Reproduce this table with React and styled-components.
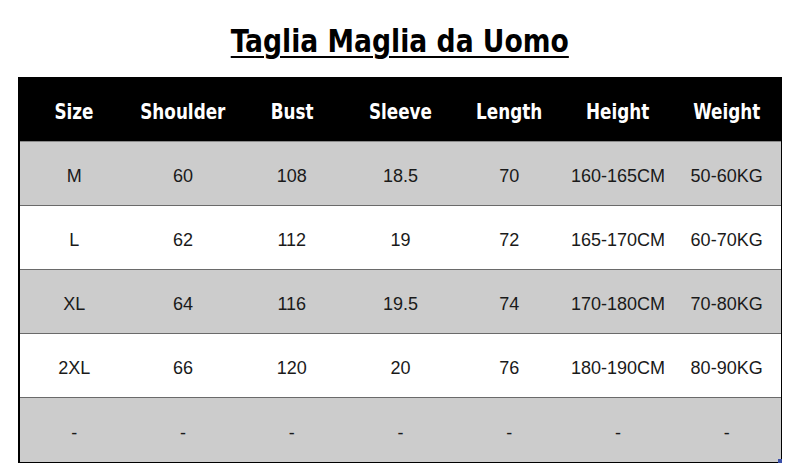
import React from "react";
import styled, { createGlobalStyle } from "styled-components";

const Global = createGlobalStyle`
  html, body { margin: 0; padding: 0; background: #fff; }
  body { width: 799px; height: 474px; overflow: hidden; }
`;

const Page = styled.div`
  width: 799px;
  height: 474px;
  display: flex;
  flex-direction: column;
  align-items: center;
  padding-top: 21px;
  box-sizing: border-box;
`;

const Title = styled.h1`
  margin: 0 0 16px;
  font-family: "DejaVu Sans Condensed", "Liberation Sans", sans-serif;
  font-weight: 700;
  font-size: 32px;
  line-height: 40px;
  color: #000;
  text-decoration: underline;
  text-decoration-thickness: 2px;
  text-underline-offset: 4px;
  transform: scaleX(0.925);
`;

const Table = styled.div`
  position: relative;
  width: 764px;
  margin-left: 1px;
  border: 1px solid #000;
  border-left-width: 2px;
  box-sizing: border-box;
  display: grid;
  grid-template-columns: repeat(7, 1fr);
`;

const Row = styled.div`
  display: contents;
`;

const HeadCell = styled.div`
  height: 64px;
  background: #000;
  color: #fff;
  display: flex;
  align-items: center;
  justify-content: center;
  font-family: "DejaVu Sans Condensed", "Liberation Sans", sans-serif;
  font-weight: 700;
  font-size: 21px;
  border-bottom: 1px solid #8a8a8a;
  box-sizing: border-box;
  padding-top: 4px;
`;

const HeadLabel = styled.span`
  display: inline-block;
  transform: scaleX(0.89);
`;

const Cell = styled.div`
  height: 64px;
  background: ${(p) => (p.$shade ? "#cccccc" : "#ffffff")};
  color: #1a1a1a;
  display: flex;
  align-items: center;
  justify-content: center;
  font-family: "Liberation Sans", Arial, sans-serif;
  font-size: 18px;
  border-bottom: ${(p) => (p.$last ? "none" : "1px solid #6a6a6a")};
  box-sizing: border-box;
  padding-top: 6px;
`;

const Handle = styled.span`
  position: absolute;
  right: -1px;
  bottom: -1px;
  width: 4px;
  height: 4px;
  background: #3a4fa8;
`;

const headers = ["Size", "Shoulder", "Bust", "Sleeve", "Length", "Height", "Weight"];
const rows = [
  ["M", "60", "108", "18.5", "70", "160-165CM", "50-60KG"],
  ["L", "62", "112", "19", "72", "165-170CM", "60-70KG"],
  ["XL", "64", "116", "19.5", "74", "170-180CM", "70-80KG"],
  ["2XL", "66", "120", "20", "76", "180-190CM", "80-90KG"],
  ["-", "-", "-", "-", "-", "-", "-"],
];

export default function App() {
  return (
    <Page>
      <Global />
      <Title>Taglia Maglia da Uomo</Title>
      <Table>
        <Row>
          {headers.map((h) => (
            <HeadCell key={h}>
              <HeadLabel>{h}</HeadLabel>
            </HeadCell>
          ))}
        </Row>
        {rows.map((r, i) => (
          <Row key={i}>
            {r.map((c, j) => (
              <Cell key={j} $shade={i % 2 === 0} $last={i === rows.length - 1}>
                {c}
              </Cell>
            ))}
          </Row>
        ))}
        <Handle />
      </Table>
    </Page>
  );
}
